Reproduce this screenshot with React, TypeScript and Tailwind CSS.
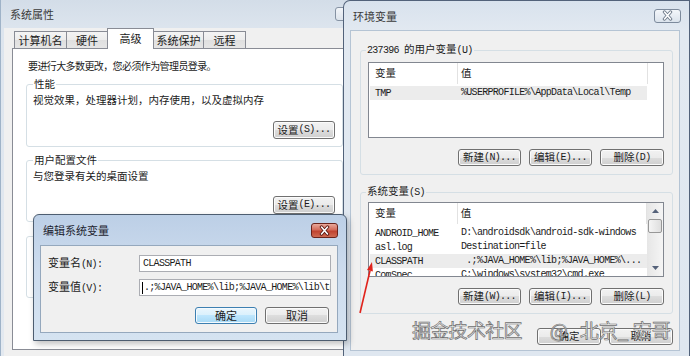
import type { ReactNode } from 'react';

// ascii parts in the old SimSun dialogs are narrow fixed-width
const M = ({ children }: { children: ReactNode }) => (
  <span className="font-['Liberation_Mono',monospace] text-[10px] tracking-[-0.7px]">{children}</span>
);

function Btn({ children, className = '', focus = false }: { children: ReactNode; className?: string; focus?: boolean }) {
  return (
    <div
      className={`flex shrink-0 items-center justify-center rounded-[3px] border text-[10.5px] leading-none ${
        focus
          ? 'border-[#3c7fb1] bg-[linear-gradient(#eaf6fd,#d9f0fc_50%,#bee6fd_50%,#a7d9f5)] shadow-[inset_0_0_0_1px_#f4fafe]'
          : 'border-[#707070] bg-[linear-gradient(#f2f2f2,#ebebeb_50%,#dddddd_50%,#cfcfcf)] shadow-[inset_0_0_0_1px_#fbfbfb]'
      } ${className}`}
    >
      {children}
    </div>
  );
}

function CloseX({ red = false }: { red?: boolean }) {
  return (
    <svg width="13" height="11" viewBox="0 0 13 11">
      <path d="M3.5 2 L9.5 9 M9.5 2 L3.5 9" stroke={red ? '#5a1710' : '#6f7b8a'} strokeWidth="3.4" strokeLinecap="round" />
      <path d="M3.5 2 L9.5 9 M9.5 2 L3.5 9" stroke="#ffffff" strokeWidth="1.6" strokeLinecap="round" />
    </svg>
  );
}

type Row = { name: string; value: string; sel?: boolean };

function ScrollBar() {
  return (
    <div className="flex w-[16px] shrink-0 flex-col bg-[linear-gradient(90deg,#e6e6e6,#f5f5f5)]">
      <div className="flex h-[16px] items-center justify-center">
        <svg width="7" height="4" viewBox="0 0 7 4">
          <path d="M0 4 L3.5 0 L7 4Z" fill="#55627a" />
        </svg>
      </div>
      <div className="mx-[1px] h-[14px] rounded-[2px] border border-[#979797] bg-[linear-gradient(90deg,#f5f5f5,#dedede)]" />
      <div className="flex-1" />
      <div className="flex h-[16px] items-center justify-center">
        <svg width="7" height="4" viewBox="0 0 7 4">
          <path d="M0 0 L3.5 4 L7 0Z" fill="#55627a" />
        </svg>
      </div>
    </div>
  );
}

function ListView({ rows, scroll = false, className = '' }: { rows: Row[]; scroll?: boolean; className?: string }) {
  return (
    <div className={`flex w-[296px] overflow-hidden border border-[#828790] bg-white ${className}`}>
      <div className="flex flex-1 flex-col overflow-hidden">
        <div className="flex h-[21px] shrink-0 text-[10.5px] leading-none">
          <div className="flex w-[89px] items-center border-r border-[#e2e2e2] pl-[6px]">变量</div>
          <div className="flex w-[190px] items-center border-r border-[#e2e2e2] pl-[3px]">值</div>
        </div>
        <div className="mt-[2px]">
          {rows.map((r) => (
            <div
              key={r.name}
              className={`mx-[1px] flex h-[14px] w-[277px] items-center overflow-hidden whitespace-pre ${r.sel ? 'bg-[#ececec]' : ''}`}
            >
              <div className="w-[91px] shrink-0 pl-[5px]">
                <M>{r.name}</M>
              </div>
              <M>{r.value}</M>
            </div>
          ))}
        </div>
      </div>
      {scroll && <ScrollBar />}
    </div>
  );
}

const userVars: Row[] = [{ name: 'TMP', value: '%USERPROFILE%\\AppData\\Local\\Temp', sel: true }];

const sysVars: Row[] = [
  { name: 'ANDROID_HOME', value: 'D:\\androidsdk\\android-sdk-windows' },
  { name: 'asl.log', value: 'Destination=file' },
  { name: 'CLASSPATH', value: ' .;%JAVA_HOME%\\lib;%JAVA_HOME%\\...', sel: true },
  { name: 'ComSpec', value: 'C:\\windows\\system32\\cmd.exe' },
];

const tabs = [
  { label: '计算机名', w: 'w-[53px]' },
  { label: '硬件', w: 'w-[42px]' },
  { label: '高级', w: 'w-[47px]', active: true },
  { label: '系统保护', w: 'w-[51px]' },
  { label: '远程', w: 'w-[43px]' },
];

export default function App() {
  return (
    <div className="relative h-[356px] w-[690px] overflow-hidden bg-[#dfe7f0] font-['Noto_Sans_CJK_SC','Liberation_Sans',sans-serif] text-[10.5px] leading-[12px] text-[#1b1b1b]">
      {/* 系统属性 */}
      <div className="absolute left-0 top-0 flex h-[356px] w-[372px] flex-col overflow-hidden border-l border-[#9fb3c8] bg-[linear-gradient(180deg,#d3dde8,#dde5ee_30px,#e3e9f0)]">
        <div className="flex h-[28px] shrink-0 items-center pl-[9px]">
          <span className="text-[11px] text-[#3a3a3a]">系统属性</span>
          <div className="ml-auto mr-[10px] h-[14px] w-[27px] rounded-[3px] border border-[#8592a3] bg-[linear-gradient(#f2f5f9,#dde4ec)]" />
        </div>
        <div className="ml-[3px] flex flex-1 flex-col bg-[#f0f0f0]">
          <div className="flex h-[21px] shrink-0 items-end pl-[10px] text-[11px] leading-none">
            {tabs.map((t) =>
              t.active ? (
                <div
                  key={t.label}
                  className={`relative z-10 -ml-px flex h-[21px] items-center justify-center border border-b-0 border-[#898c95] bg-white pb-[2px] ${t.w}`}
                >
                  {t.label}
                </div>
              ) : (
                <div
                  key={t.label}
                  className={`mb-[1px] flex h-[17px] items-center justify-center border border-b-0 border-[#898c95] bg-[linear-gradient(#f4f4f4,#ececec_50%,#dfdfdf_50%,#e6e6e6)] pt-[1px] [&:not(:first-child)]:-ml-px ${t.w}`}
                >
                  {t.label}
                </div>
              ),
            )}
          </div>
          <div className="-mt-px ml-[8px] h-[302px] w-[400px] border border-[#898c95] bg-white pl-[13px] pt-[11px]">
            <p className="pl-[2px] text-[10px] tracking-[-0.6px]">要进行大多数更改，您必须作为管理员登录。</p>

            <fieldset className="mt-[6px] w-[317px] rounded-[3px] border border-[#d5dfe5] pb-[7px] pl-[6px] pr-[7px]">
              <legend className="px-[1px]">性能</legend>
              <p className="mt-[4px]">视觉效果，处理器计划，内存使用，以及虚拟内存</p>
              <div className="mt-[15px] flex justify-end">
                <Btn className="h-[18px] w-[62px]">
                  设置<M>(S)...</M>
                </Btn>
              </div>
            </fieldset>

            <fieldset className="mt-[7px] w-[317px] rounded-[3px] border border-[#d5dfe5] pb-[7px] pl-[6px] pr-[7px]">
              <legend className="px-[1px]">用户配置文件</legend>
              <p className="mt-[4px]">与您登录有关的桌面设置</p>
              <div className="mt-[14px] flex justify-end">
                <Btn className="h-[18px] w-[62px]">
                  设置<M>(E)...</M>
                </Btn>
              </div>
            </fieldset>

            {/* third group sits behind the edit dialog, only its left edge shows */}
            <div className="mt-[14px] h-[62px] w-[317px] rounded-[3px] border border-[#d5dfe5]" />
          </div>
        </div>
      </div>

      {/* 环境变量 */}
      <div className="absolute left-[343px] top-0 flex h-[356px] w-[347px] flex-col rounded-tl-[7px] border-l border-r border-t border-[#52627a] bg-[linear-gradient(180deg,#d8e2ed,#e2e9f1_30px,#dfe7f0)]">
        <div className="flex h-[29px] shrink-0 items-center justify-between pl-[9px] pr-[8px]">
          <span className="text-[11px] text-[#3a3a3a]">环境变量</span>
          <div className="flex h-[14px] w-[27px] items-center justify-center rounded-[3px] border border-[#7c8a9c] bg-[linear-gradient(#f3f6fa,#dbe3ec)]">
            <CloseX />
          </div>
        </div>
        <div className="ml-[6px] mr-[9px] flex h-[321px] flex-col border border-[#b5c4d4] bg-[#f0f0f0] pl-[9px] pr-[6px] pt-[12px]">
          <fieldset className="w-[313px] rounded-[3px] border border-[#d5dfe5] pb-[8px] pl-[7px] pr-[8px]">
            <legend className="-ml-[2px] px-[1px]">
              <M>237396 </M>的用户变量<M>(U)</M>
            </legend>
            <ListView rows={userVars} className="mt-[5px] h-[76px]" />
            <div className="mt-[11px] flex justify-end gap-[8px]">
              <Btn className="h-[17px] w-[63px]">
                新建<M>(N)...</M>
              </Btn>
              <Btn className="h-[17px] w-[63px]">
                编辑<M>(E)...</M>
              </Btn>
              <Btn className="h-[17px] w-[64px]">
                删除<M>(D)</M>
              </Btn>
            </div>
          </fieldset>

          <fieldset className="mt-[10px] w-[313px] rounded-[3px] border border-[#d5dfe5] pb-[8px] pl-[7px] pr-[8px]">
            <legend className="-ml-[2px] px-[1px]">
              系统变量<M>(S)</M>
            </legend>
            <ListView rows={sysVars} scroll className="mt-[3px] h-[75px]" />
            <div className="mt-[11px] flex justify-end gap-[8px]">
              <Btn className="h-[17px] w-[63px]">
                新建<M>(W)...</M>
              </Btn>
              <Btn className="h-[17px] w-[63px]">
                编辑<M>(I)...</M>
              </Btn>
              <Btn className="h-[17px] w-[64px]">
                删除<M>(L)</M>
              </Btn>
            </div>
          </fieldset>

          <div className="mt-[14px] flex justify-end gap-[8px]">
            <Btn className="h-[17px] w-[64px]">确定</Btn>
            <Btn className="h-[17px] w-[64px]">取消</Btn>
          </div>
        </div>
      </div>

      {/* 编辑系统变量 */}
      <div className="absolute left-[33px] top-[214px] flex h-[127px] w-[314px] flex-col rounded-t-[6px] border border-[#4d5d70] bg-[linear-gradient(180deg,#bccfe6,#cddcee_45%,#d5e3f1)] shadow-[2px_3px_6px_rgba(0,0,0,0.25)]">
        <div className="flex h-[30px] shrink-0 items-center justify-between pl-[9px] pr-[8px]">
          <span className="text-[11px] text-[#1e2530]">编辑系统变量</span>
          <div className="flex h-[15px] w-[27px] items-center justify-center rounded-[3px] border border-[#6b231b] bg-[linear-gradient(#e9a99b,#d36b5a_45%,#c0432f_55%,#cf6a52)]">
            <CloseX red />
          </div>
        </div>
        <div className="ml-[6px] mr-[8px] flex flex-1 flex-col border border-[#95a8bd] bg-[#f0f0f0] pl-[7px] pr-[6px] pt-[9px]">
          <div className="flex items-center">
            <span className="w-[91px] shrink-0 text-[11px]">
              变量名<M>(N):</M>
            </span>
            <div className="flex h-[17px] w-[192px] items-center border border-[#abadb3] bg-white pl-[3px]">
              <M>CLASSPATH</M>
            </div>
          </div>
          <div className="mt-[7px] flex items-center">
            <span className="w-[91px] shrink-0 text-[11px]">
              变量值<M>(V):</M>
            </span>
            <div className="flex h-[17px] w-[192px] items-center overflow-hidden whitespace-nowrap border border-[#abadb3] bg-white pl-[2px]">
              <span className="mr-[1px] h-[12px] w-px shrink-0 bg-black" />
              <M>.;%JAVA_HOME%\lib;%JAVA_HOME%\lib\tools.jar</M>
            </div>
          </div>
          <div className="mr-[2px] mt-[11px] flex justify-end gap-[8px]">
            <Btn focus className="h-[17px] w-[62px] text-[11px]">
              确定
            </Btn>
            <Btn className="h-[17px] w-[64px] text-[11px]">取消</Btn>
          </div>
        </div>
        <div className="h-[7px] shrink-0" />
      </div>

      {/* red arrow */}
      <svg className="absolute left-[355px] top-[255px]" width="24" height="64" viewBox="0 0 24 64">
        <path d="M5 58 L15 15.8" stroke="#e0231c" strokeWidth="1.6" />
        <path d="M17 7 L17.9 16.5 L12 15.1Z" fill="#e0231c" />
      </svg>

      {/* watermark */}
      <div className="absolute left-[412px] top-[318px] flex items-center whitespace-nowrap text-[19px] leading-[24px] text-[#f0f0f0] [-webkit-text-stroke:0.7px_#6e6e6e]">
        <span className="tracking-[-0.7px]">掘金技术社区</span>
        <span className="ml-[28px]">@</span>
        <span className="ml-[12px]">北京</span>
        <span className="w-[15px]">_</span>
        <span>宏哥</span>
      </div>
    </div>
  );
}
